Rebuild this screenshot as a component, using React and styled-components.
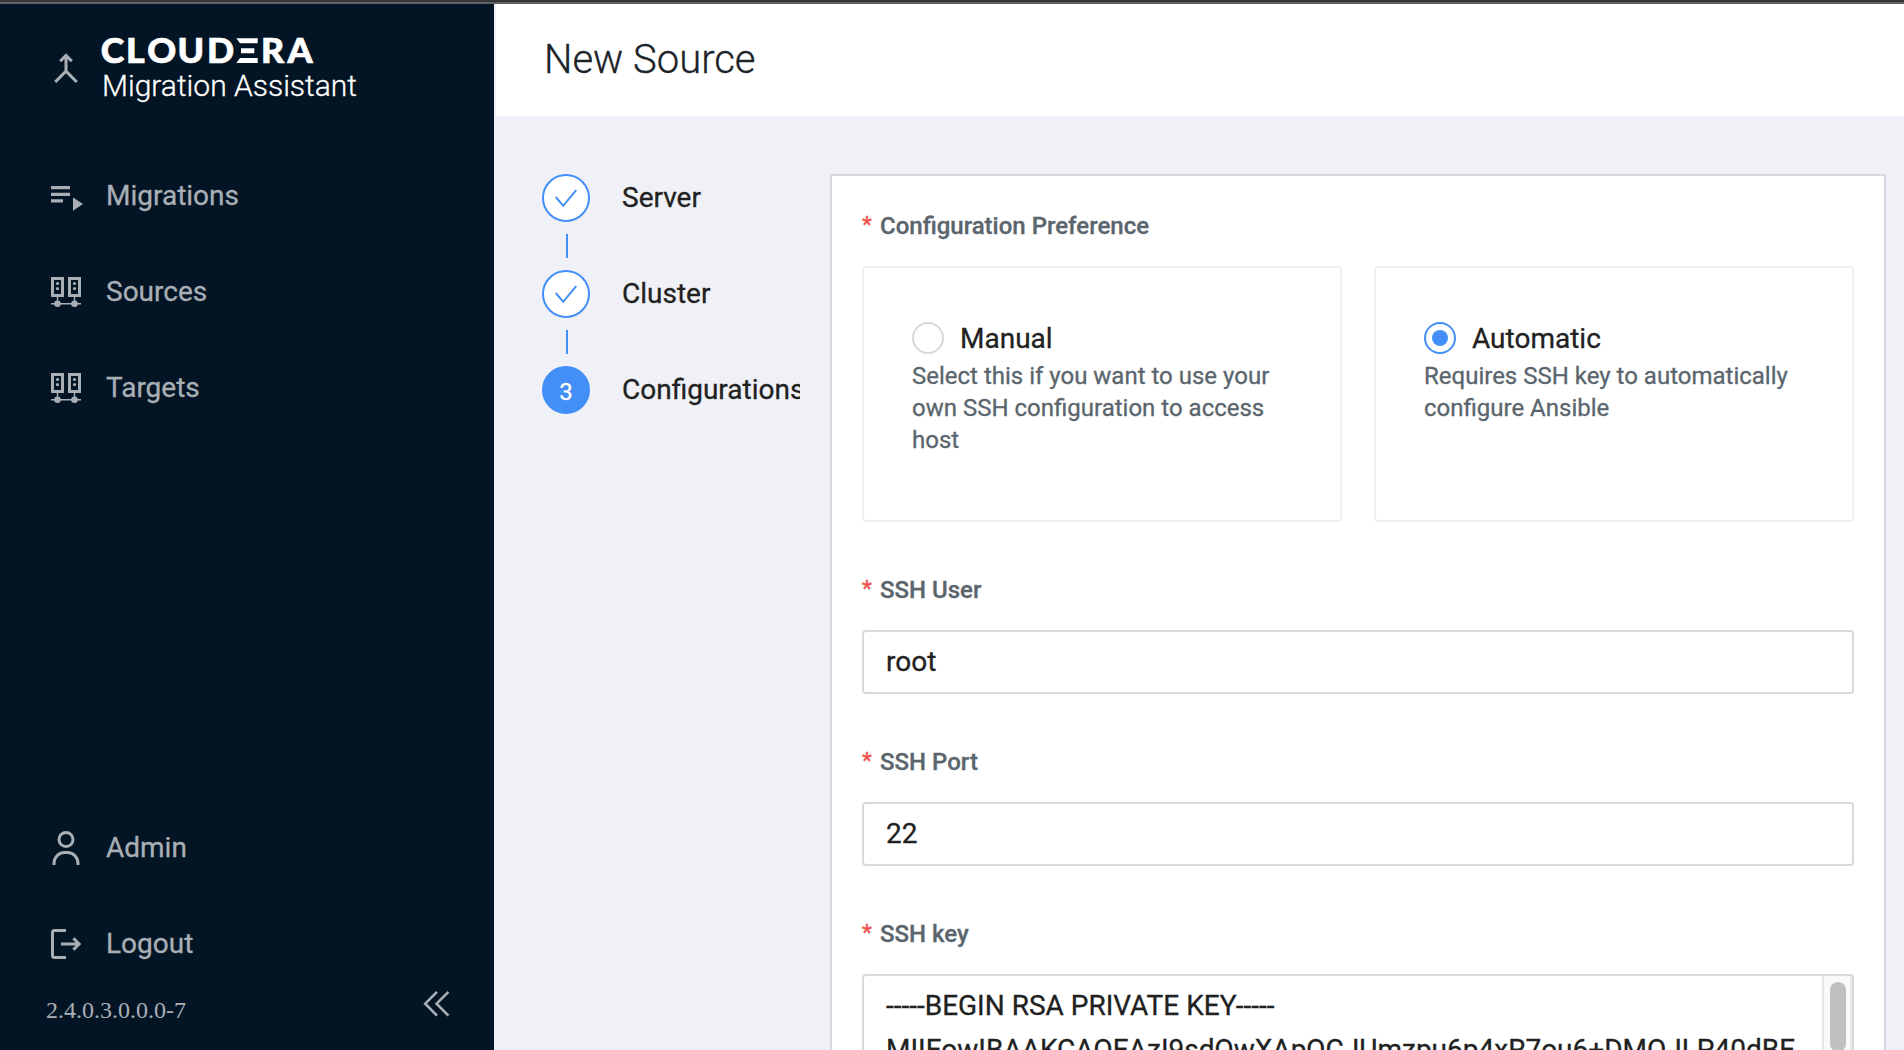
import React from "react";
import styled, { createGlobalStyle } from "styled-components";

const GlobalStyle = createGlobalStyle`
  * { box-sizing: border-box; }
  body {
    margin: 0;
    overflow: hidden;
    font-family: Roboto, "Liberation Sans", sans-serif;
    -webkit-font-smoothing: antialiased;
    -webkit-text-stroke: 0.3px currentColor;
  }
`;

const Screen = styled.div`
  height: 1050px;
  display: flex;
  flex-direction: column;
  overflow: hidden;
  background: #f0f1f6;
`;

const WindowEdge = styled.div`
  flex: none;
  height: 4px;
  background: #37373a;
  border-bottom: 2px solid #606064;
`;

const Layout = styled.div`
  flex: 1;
  min-height: 0;
  display: flex;
`;

const Sidebar = styled.nav`
  flex: none;
  width: 494px;
  display: flex;
  flex-direction: column;
  background: #031525;
  color: #a9afb5;
`;

const Brand = styled.div`
  flex: none;
  display: flex;
  height: 144px;
  padding: 20px 0 0 54px;
`;

const BrandMark = styled.svg`
  flex: none;
  margin-top: 28px;
  width: 24px;
  height: 32px;
`;

const BrandText = styled.div`
  margin-left: 22px;
  color: #fff;
`;

const Wordmark = styled.svg`
  display: block;
  width: 230px;
  height: 50px;
  margin-bottom: -8px;
  font-family: Lato, sans-serif;
  font-weight: 900;
  font-size: 34px;
  -webkit-text-stroke: 0;
`;

const Product = styled.div`
  padding-left: 2px;
  font-size: 30px;
  line-height: 40px;
  font-weight: 300;
  white-space: nowrap;
`;

const MenuItem = styled.div`
  flex: none;
  display: flex;
  align-items: center;
  height: 96px;
  padding-left: 48px;
  font-size: 28px;
  line-height: 40px;

  svg {
    flex: none;
    width: 36px;
    height: 36px;
    margin-right: 22px;
  }
`;

const Spacer = styled.div`
  flex: 1;
`;

const SidebarFooter = styled.div`
  flex: none;
  display: flex;
  justify-content: space-between;
  height: 58px;
  padding: 0 43px 0 46px;
`;

const Version = styled.span`
  font-family: "Liberation Serif", serif;
  font-size: 24px;
  line-height: 28px;
  margin-top: 4px;
  -webkit-text-stroke: 0;
`;

const Collapse = styled.svg`
  width: 30px;
  height: 30px;
  margin-top: -2px;
`;

const Main = styled.main`
  flex: 1;
  min-width: 0;
  display: flex;
  flex-direction: column;
  padding-left: 2px;
`;

const Header = styled.header`
  flex: none;
  height: 112px;
  padding: 26px 0 0 48px;
  background: #fff;
  color: #1b2329;
  font-size: 40px;
  line-height: 60px;
  font-weight: 300;
`;

const Content = styled.div`
  flex: 1;
  min-height: 0;
  display: flex;
  align-items: flex-start;
  padding: 58px 18px 0 46px;
`;

const Steps = styled.div`
  flex: none;
  width: 258px;
  margin-right: 30px;
  overflow: hidden;
`;

const Step = styled.div`
  display: flex;
  align-items: center;
  height: 48px;
  font-size: 28px;
  line-height: 34px;
  color: #212121;
  white-space: nowrap;
`;

const StepIcon = styled.div`
  flex: none;
  display: grid;
  place-items: center;
  width: 48px;
  height: 48px;
  margin-right: 32px;
  border: 2px solid #438ff8;
  border-radius: 50%;
  background: ${(p) => (p.$active ? "#438ff8" : "#fff")};
  color: ${(p) => (p.$active ? "#fff" : "#438ff8")};
  font-size: 24px;
  line-height: 24px;
  padding-top: ${(p) => (p.$active ? "4px" : "0")};
`;

const StepTail = styled.div`
  width: 2px;
  height: 24px;
  margin: 12px 0 12px 24px;
  background: #438ff8;
`;

const Panel = styled.section`
  flex: 1;
  height: 1100px;
  padding: 30px 30px 0;
  border: 2px solid #d6d8dd;
  background: #fff;
`;

const Label = styled.div`
  display: flex;
  height: 40px;
  color: #5a656d;
  font-size: 24px;
  line-height: 40px;
  font-weight: 500;

  &::before {
    content: "*";
    width: 18px;
    color: #f0524f;
    font-size: 22px;
    line-height: 38px;
  }
`;

const Choices = styled.div`
  display: grid;
  grid-template-columns: 1fr 1fr;
  gap: 32px;
  margin: 20px 0 48px;
`;

const Choice = styled.div`
  height: 256px;
  padding: 48px;
  border: 2px solid #f0f0f0;
  border-radius: 4px;
`;

const ChoiceTitle = styled.div`
  display: flex;
  align-items: center;
  height: 44px;
  color: #212121;
  font-size: 28px;
`;

const Radio = styled.span`
  flex: none;
  display: grid;
  place-items: center;
  width: 32px;
  height: 32px;
  margin-right: 16px;
  border: 2px solid ${(p) => (p.$checked ? "#438ff8" : "#d9d9d9")};
  border-radius: 50%;

  &::after {
    content: "";
    width: 16px;
    height: 16px;
    border-radius: 50%;
    background: ${(p) => (p.$checked ? "#438ff8" : "transparent")};
  }
`;

const ChoiceText = styled.div`
  color: #5a656d;
  font-size: 24px;
  line-height: 32px;
`;

const Input = styled.div`
  height: 64px;
  margin: 20px 0 48px;
  padding: 0 22px;
  border: 2px solid #d9d9d9;
  border-radius: 4px;
  color: #212121;
  font-size: 28px;
  line-height: 59px;
`;

const TextArea = styled.div`
  display: flex;
  height: 300px;
  margin-top: 20px;
  border: 2px solid #d9d9d9;
  border-radius: 4px;
  color: #212121;
  font-size: 28px;
  line-height: 44px;
`;

const KeyText = styled.div`
  flex: 1;
  min-width: 0;
  padding: 8px 0 0 22px;
  white-space: pre;
`;

const ScrollTrack = styled.div`
  flex: none;
  width: 30px;
  padding: 6px 6px 0;
  border: solid #e8e8e8;
  border-width: 0 2px;
  background: #fafafa;
`;

const ScrollThumb = styled.div`
  width: 16px;
  height: 70px;
  border-radius: 8px;
  background: #c1c1c1;
`;

const CheckIcon = () => (
  <svg width="24" height="24" viewBox="0 0 24 24" fill="none" stroke="currentColor" strokeWidth="2">
    <path d="M1.8 11 L9.2 19.800 L22.200 4.200" />
  </svg>
);

const ServersIcon = () => (
  <svg viewBox="0 0 36 36" fill="none" stroke="currentColor">
    <path strokeWidth="3" d="M4.5 4.5h10v17h-10zM21.5 4.5h10v17h-10z" />
    <path strokeWidth="1.4" d="M9.5 22v7M26.5 22v7M3 29.7h30" />
    <g fill="currentColor" stroke="none">
      <circle cx="9.5" cy="9.5" r="1.6" />
      <circle cx="9.5" cy="14.6" r="1.6" />
      <circle cx="26.5" cy="9.5" r="1.6" />
      <circle cx="26.5" cy="14.6" r="1.6" />
      <circle cx="9.5" cy="29.7" r="3.3" />
      <circle cx="26.5" cy="29.7" r="3.3" />
    </g>
  </svg>
);

const MigrationsIcon = () => (
  <svg viewBox="0 0 36 36" fill="currentColor">
    <path d="M3 8h19v3.200H3zM3 14.800h19v3.200H3zM3 21.300h12v3.200H3zM25 19.500l10 6.600-10 6.600z" />
  </svg>
);

const UserIcon = () => (
  <svg viewBox="0 0 36 36" fill="none" stroke="currentColor" strokeWidth="3">
    <circle cx="18" cy="9.5" r="7" />
    <path d="M6 35 V33.500 C6 27.300 10.600 22.500 16.500 22.500 H19.500 C25.400 22.500 30 27.300 30 33.500 V35" />
  </svg>
);

const LogoutIcon = () => (
  <svg viewBox="0 0 36 36" fill="none" stroke="currentColor" strokeWidth="3">
    <path d="M18 4.500H6.500a2 2 0 0 0-2 2v23a2 2 0 0 0 2 2H18M13 18h17M25.400 12.300l5.700 5.700-5.700 5.700" />
  </svg>
);

const choices = [
  { title: "Manual", text: "Select this if you want to use your own SSH configuration to access host" },
  { title: "Automatic", text: "Requires SSH key to automatically configure Ansible", checked: true },
];

export default function App() {
  return (
    <Screen>
      <GlobalStyle />
      <WindowEdge />
      <Layout>
        <Sidebar>
          <Brand>
            <BrandMark viewBox="0 0 24 32" fill="none" stroke="currentColor" strokeWidth="3">
              <path d="M12 4v16M6.200 9.200L12 3.400l5.800 5.800M1.200 30L12 19.200 22.800 30" />
            </BrandMark>
            <BrandText>
              <Wordmark viewBox="0 -14 230 50" fill="#fff">
                <text
                  y="25"
                  x="0.8 24.8 45 73.800 101.900 128 153.300 178.500"
                  transform="scale(1.05 1)"
                  stroke="#fff"
                  strokeWidth="0.7"
                >
                  CLOUD<tspan fill="transparent" stroke="none">E</tspan>RA
                </text>
                <path d="M136.300 0.200h21.400v5h-17.700zM141 10.300h13.300v5H141zM140 19.900h17.700v5h-21.400z" />
              </Wordmark>
              <Product>Migration Assistant</Product>
            </BrandText>
          </Brand>
          <MenuItem><MigrationsIcon />Migrations</MenuItem>
          <MenuItem><ServersIcon />Sources</MenuItem>
          <MenuItem><ServersIcon />Targets</MenuItem>
          <Spacer />
          <MenuItem><UserIcon />Admin</MenuItem>
          <MenuItem><LogoutIcon />Logout</MenuItem>
          <SidebarFooter>
            <Version>2.4.0.3.0.0.0-7</Version>
            <Collapse viewBox="0 0 30 30" fill="none" stroke="currentColor" strokeWidth="2.6">
              <path d="M16 1.800L4.200 13.700 16 25.600M27.400 1.800L15.600 13.700 27.400 25.600" />
            </Collapse>
          </SidebarFooter>
        </Sidebar>
        <Main>
          <Header>New Source</Header>
          <Content>
            <Steps>
              <Step><StepIcon><CheckIcon /></StepIcon>Server</Step>
              <StepTail />
              <Step><StepIcon><CheckIcon /></StepIcon>Cluster</Step>
              <StepTail />
              <Step><StepIcon $active>3</StepIcon>Configurations</Step>
            </Steps>
            <Panel>
              <Label>Configuration Preference</Label>
              <Choices>
                {choices.map((c) => (
                  <Choice key={c.title}>
                    <ChoiceTitle><Radio $checked={c.checked} />{c.title}</ChoiceTitle>
                    <ChoiceText>{c.text}</ChoiceText>
                  </Choice>
                ))}
              </Choices>
              <Label>SSH User</Label>
              <Input>root</Input>
              <Label>SSH Port</Label>
              <Input>22</Input>
              <Label>SSH key</Label>
              <TextArea>
                <KeyText>{"-----BEGIN RSA PRIVATE KEY-----\nMIIEowIBAAKCAQEAzI9sdQwXApQCJUmzpu6p4xR7ou6+DMOJLP40dBE"}</KeyText>
                <ScrollTrack><ScrollThumb /></ScrollTrack>
              </TextArea>
            </Panel>
          </Content>
        </Main>
      </Layout>
    </Screen>
  );
}
